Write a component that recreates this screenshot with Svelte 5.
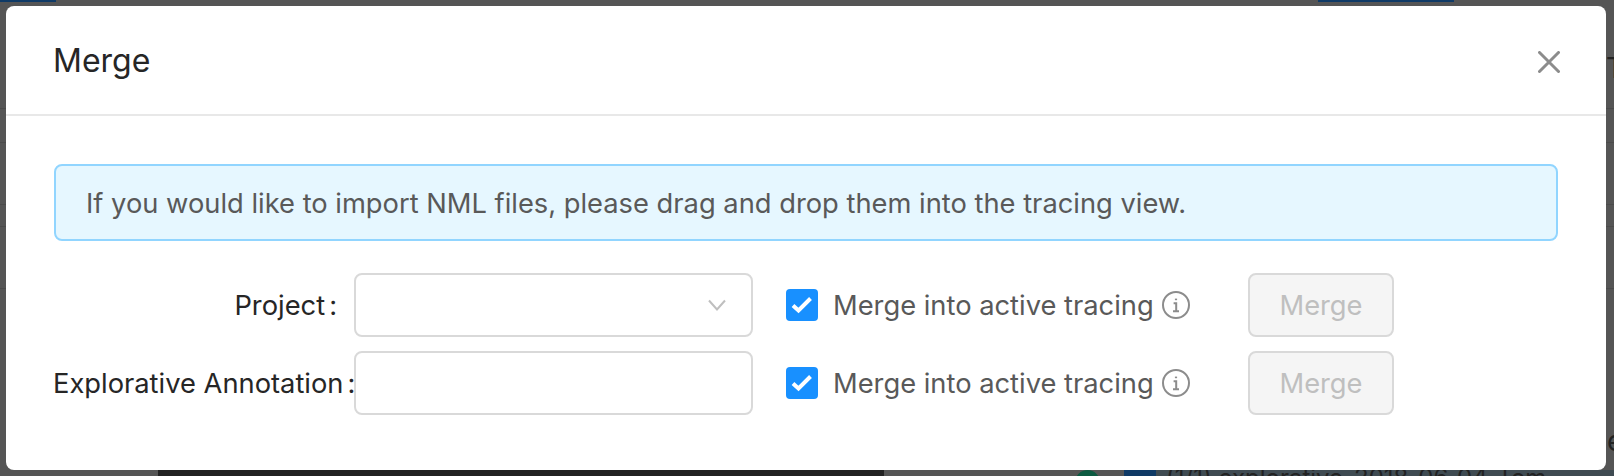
<script>
  const rows = [
    { label: 'Project', select: true },
    { label: 'Explorative Annotation', select: false }
  ];
</script>

<div class="page">
  <div class="backdrop" aria-hidden="true">
    <span class="strip blue-a"></span>
    <span class="strip blue-b"></span>
    <span class="strip dark"></span>
    <span class="strip slate"></span>
    <span class="strip blue-c"></span>
    <span class="dot"></span>
    <span class="ghost t">T</span>
    <span class="ghost e">e</span>
    <span class="ghost list">(1/1) explorative_2018_06_04_Tom</span>
    <span class="rule r1"></span>
    <span class="rule r2"></span>
    <span class="rule r3"></span>
    <span class="rule r4"></span>
    <span class="rule r5"></span>
  </div>

  <section class="modal">
    <header class="head">
      <h2>Merge</h2>
      <button class="close" aria-label="Close">
        <svg width="22" height="22" viewBox="0 0 22 22"><path d="M1.5 1.5 20.5 20.5M20.5 1.5 1.5 20.5" /></svg>
      </button>
    </header>
    <div class="body">
      <div class="alert">If you would like to import NML files, please drag and drop them into the tracing view.</div>
      <div class="form">
        {#each rows as row}
          <div class="row">
            <div class="label"><span class="label-text">{row.label}</span></div>
            <div class="field">
              {#if row.select}
                <svg class="chev" width="18" height="14" viewBox="0 0 18 14"><path d="M1 2.5 9 11.5 17 2.5" /></svg>
              {/if}
            </div>
            <div class="check">
              <span class="box">
                <svg width="32" height="32" viewBox="0 0 32 32"><path d="M7 16.5 12.5 21.5 24.5 9.5" /></svg>
              </span>
              <span class="check-text">Merge into active tracing</span>
              <svg class="info" width="28" height="28" viewBox="0 0 28 28">
                <circle cx="14" cy="14" r="13" />
                <path class="i-dot" d="M14 7.6v1.6" />
                <path d="M11.6 12.2H14.2V20M11 20.2H17" />
              </svg>
            </div>
            <button class="merge" disabled>Merge</button>
          </div>
        {/each}
      </div>
    </div>
  </section>
</div>

<style>
  :global(body) {
    margin: 0;
    background: #555;
  }
  .page {
    position: relative;
    width: 1614px;
    height: 476px;
    overflow: hidden;
    background: #555;
    font-family: Inter, "Liberation Sans", sans-serif;
    padding: 6px;
    box-sizing: border-box;
  }
  .backdrop {
    position: absolute;
    inset: 0;
  }
  .strip {
    position: absolute;
  }
  .blue-a { left: 0; top: 0; width: 56px; height: 2px; background: #0f3a66; }
  .blue-b { left: 1318px; top: 0; width: 136px; height: 2px; background: #0f3a66; }
  .dark { left: 158px; top: 470px; width: 726px; height: 6px; background: #222; }
  .slate { left: 1156px; top: 470px; width: 458px; height: 6px; background: #3f4b52; }
  .blue-c { left: 1124px; top: 470px; width: 32px; height: 6px; background: #0f3a66; }
  .dot {
    position: absolute;
    left: 1075px;
    top: 470px;
    width: 25px;
    height: 25px;
    border-radius: 50%;
    background: #0c5a41;
  }
  .ghost {
    position: absolute;
    color: #222;
    font-size: 28px;
    line-height: 34px;
    white-space: nowrap;
  }
  .t { left: 1606px; top: 51px; }
  .e { left: 1607px; top: 424px; }
  .list { left: 1166px; top: 461px; font-size: 24px; }
  .rule {
    position: absolute;
    left: 0;
    right: 0;
    height: 1px;
    background: #4b4b4b;
  }
  .r1 { top: 108px; }
  .r2 { top: 142px; }
  .r3 { top: 204px; }
  .r4 { top: 226px; }
  .r5 { top: 288px; }

  .modal {
    position: relative;
    width: 1600px;
    height: 464px;
    background: #fff;
    border-radius: 8px;
    overflow: hidden;
  }
  .head {
    height: 108px;
    box-sizing: content-box;
    border-bottom: 2px solid #e8e8e8;
    display: flex;
    align-items: center;
    justify-content: space-between;
    padding: 0 46px 0 47px;
  }
  h2 {
    margin: 2px 0 0;
    font-size: 32px;
    line-height: 44px;
    font-weight: 400;
    color: #262626;
  }
  .close {
    display: flex;
    padding: 0;
    margin-top: 4px;
    border: 0;
    background: none;
  }
  .close path {
    fill: none;
    stroke: #8c8c8c;
    stroke-width: 3px;
    stroke-linecap: round;
  }
  .body {
    padding: 48px 48px 0;
  }
  .alert {
    height: 77px;
    box-sizing: border-box;
    display: flex;
    align-items: center;
    padding: 2px 30px 0;
    background: #e6f7ff;
    border: 2px solid #91d5ff;
    border-radius: 8px;
    font-size: 27.3px;
    color: #595959;
  }
  .form {
    margin-top: 32px;
    display: flex;
    flex-direction: column;
    gap: 14px;
  }
  .row {
    display: grid;
    grid-template-columns: 300px 399px 495px 146px;
    align-items: center;
    height: 64px;
  }
  .label {
    overflow: hidden;
    white-space: nowrap;
    text-align: right;
    margin-left: -1px;
    padding-top: 2px;
    font-size: 27.3px;
    line-height: 62px;
    color: #262626;
  }
  .label-text::after {
    content: ":";
    margin: 0 17px 0 4px;
  }
  .field {
    position: relative;
    height: 64px;
    box-sizing: border-box;
    border: 2px solid #d9d9d9;
    border-radius: 8px;
    background: #fff;
  }
  .chev {
    position: absolute;
    right: 25px;
    top: 23px;
  }
  .chev path {
    fill: none;
    stroke: #bfbfbf;
    stroke-width: 2px;
  }
  .check {
    display: flex;
    align-items: center;
    padding-left: 33px;
  }
  .box {
    width: 32px;
    height: 32px;
    border-radius: 4px;
    background: #1890ff;
    display: block;
    flex: none;
  }
  .box svg {
    display: block;
  }
  .box path {
    fill: none;
    stroke: #fff;
    stroke-width: 4px;
  }
  .check-text {
    margin-left: 15px;
    font-size: 27.3px;
    color: #595959;
    white-space: nowrap;
  }
  .info {
    margin-left: 8px;
    flex: none;
  }
  .info circle,
  .info path {
    fill: none;
    stroke: #8c8c8c;
    stroke-width: 2px;
  }
  .info .i-dot {
    stroke-width: 2.2px;
  }
  .merge {
    height: 64px;
    width: 146px;
    padding: 0;
    border: 2px solid #d9d9d9;
    border-radius: 8px;
    background: #f5f5f5;
    color: #bfbfbf;
    font-family: inherit;
    font-size: 27.3px;
  }
</style>
